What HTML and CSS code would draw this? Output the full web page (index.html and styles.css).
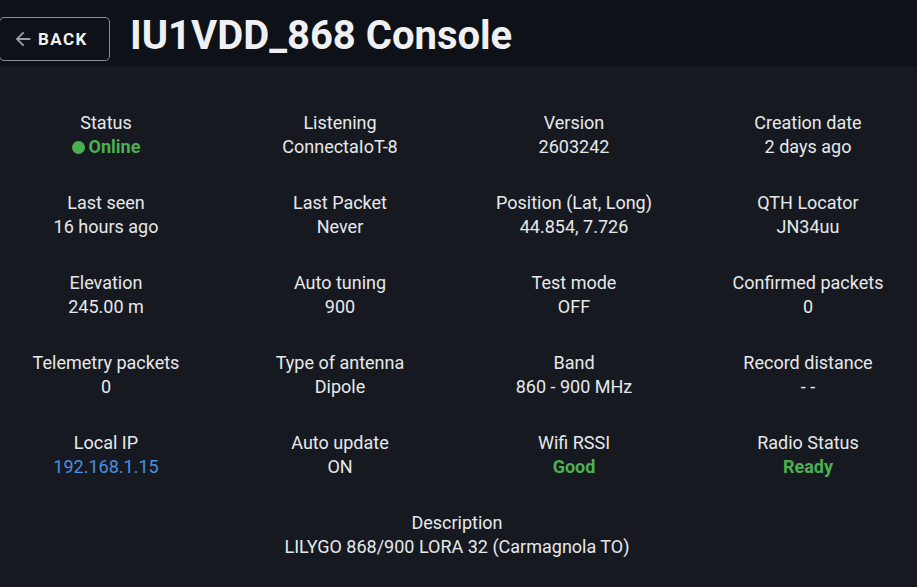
FILE: index.html
```html
<!DOCTYPE html>
<html>
<head>
<meta charset="utf-8">
<link rel="stylesheet" href="styles.css">
</head>
<body>
<header class="topbar">
  <button class="back-btn">
    <svg class="back-icon" width="22" height="22" viewBox="0 0 24 24"><path d="M20 11H7.83l5.59-5.59L12 4l-8 8 8 8 1.41-1.41L7.83 13H20v-2z" fill="currentColor"/></svg>
    <span>BACK</span>
  </button>
  <h1 class="title">IU1VDD_868 Console</h1>
</header>
<main class="content">
  <div class="grid">
    <div class="item"><div class="label">Status</div><div class="value online"><span class="dot"></span>Online</div></div>
    <div class="item"><div class="label">Listening</div><div class="value">ConnectaIoT-8</div></div>
    <div class="item"><div class="label">Version</div><div class="value">2603242</div></div>
    <div class="item"><div class="label">Creation date</div><div class="value">2 days ago</div></div>

    <div class="item"><div class="label">Last seen</div><div class="value">16 hours ago</div></div>
    <div class="item"><div class="label">Last Packet</div><div class="value">Never</div></div>
    <div class="item"><div class="label">Position (Lat, Long)</div><div class="value">44.854, 7.726</div></div>
    <div class="item"><div class="label">QTH Locator</div><div class="value">JN34uu</div></div>

    <div class="item"><div class="label">Elevation</div><div class="value">245.00 m</div></div>
    <div class="item"><div class="label">Auto tuning</div><div class="value">900</div></div>
    <div class="item"><div class="label">Test mode</div><div class="value">OFF</div></div>
    <div class="item"><div class="label">Confirmed packets</div><div class="value">0</div></div>

    <div class="item"><div class="label">Telemetry packets</div><div class="value">0</div></div>
    <div class="item"><div class="label">Type of antenna</div><div class="value">Dipole</div></div>
    <div class="item"><div class="label">Band</div><div class="value">860 - 900 MHz</div></div>
    <div class="item"><div class="label">Record distance</div><div class="value">- -</div></div>

    <div class="item"><div class="label">Local IP</div><div class="value link">192.168.1.15</div></div>
    <div class="item"><div class="label">Auto update</div><div class="value">ON</div></div>
    <div class="item"><div class="label">Wifi RSSI</div><div class="value good">Good</div></div>
    <div class="item"><div class="label">Radio Status</div><div class="value good">Ready</div></div>

    <div class="item wide"><div class="label">Description</div><div class="value">LILYGO 868/900 LORA 32 (Carmagnola TO)</div></div>
  </div>
</main>
</body>
</html>
```
FILE: styles.css
```css
* { box-sizing: border-box; }
html, body {
  margin: 0;
  padding: 0;
  height: 100%;
  overflow: hidden;
}
body {
  background: #161a20;
  color: #e6e8eb;
  font-family: Roboto, "Noto Sans", sans-serif;
}
.topbar {
  background: #0e1117;
  height: 66px;
  display: flex;
  align-items: flex-start;
  gap: 20px;
  padding-top: 17px;
}
.back-btn {
  margin-left: -1px;
  height: 44px;
  width: 111px;
  display: flex;
  align-items: center;
  gap: 4px;
  background: transparent;
  border: 1px solid #8a8f96;
  border-radius: 5px;
  color: #eef0f3;
  font-family: Roboto, sans-serif;
  font-weight: 700;
  font-size: 17px;
  letter-spacing: 1.4px;
  padding: 0 0 0 12px;
}
.back-icon { color: #9aa0a6; }
.title {
  margin: 0;
  margin-top: -1px;
  font-size: 40px;
  font-weight: 700;
  color: #eef0f3;
  line-height: 40px;
}
.content {
  padding-top: 45px;
}
.grid {
  display: grid;
  grid-template-columns: repeat(4, 234px);
  justify-content: center;
  row-gap: 32px;
  margin-left: -3px;
}
.item {
  text-align: center;
  font-size: 18px;
  line-height: 24px;
}
.wide { grid-column: 1 / -1; }
.online, .good { color: #4caf50; font-weight: 700; }
.link { color: #4a90e2; }
.dot {
  display: inline-block;
  width: 13px;
  height: 13px;
  border-radius: 50%;
  background: #4caf50;
  margin-right: 4px;
  vertical-align: -1px;
}
```
